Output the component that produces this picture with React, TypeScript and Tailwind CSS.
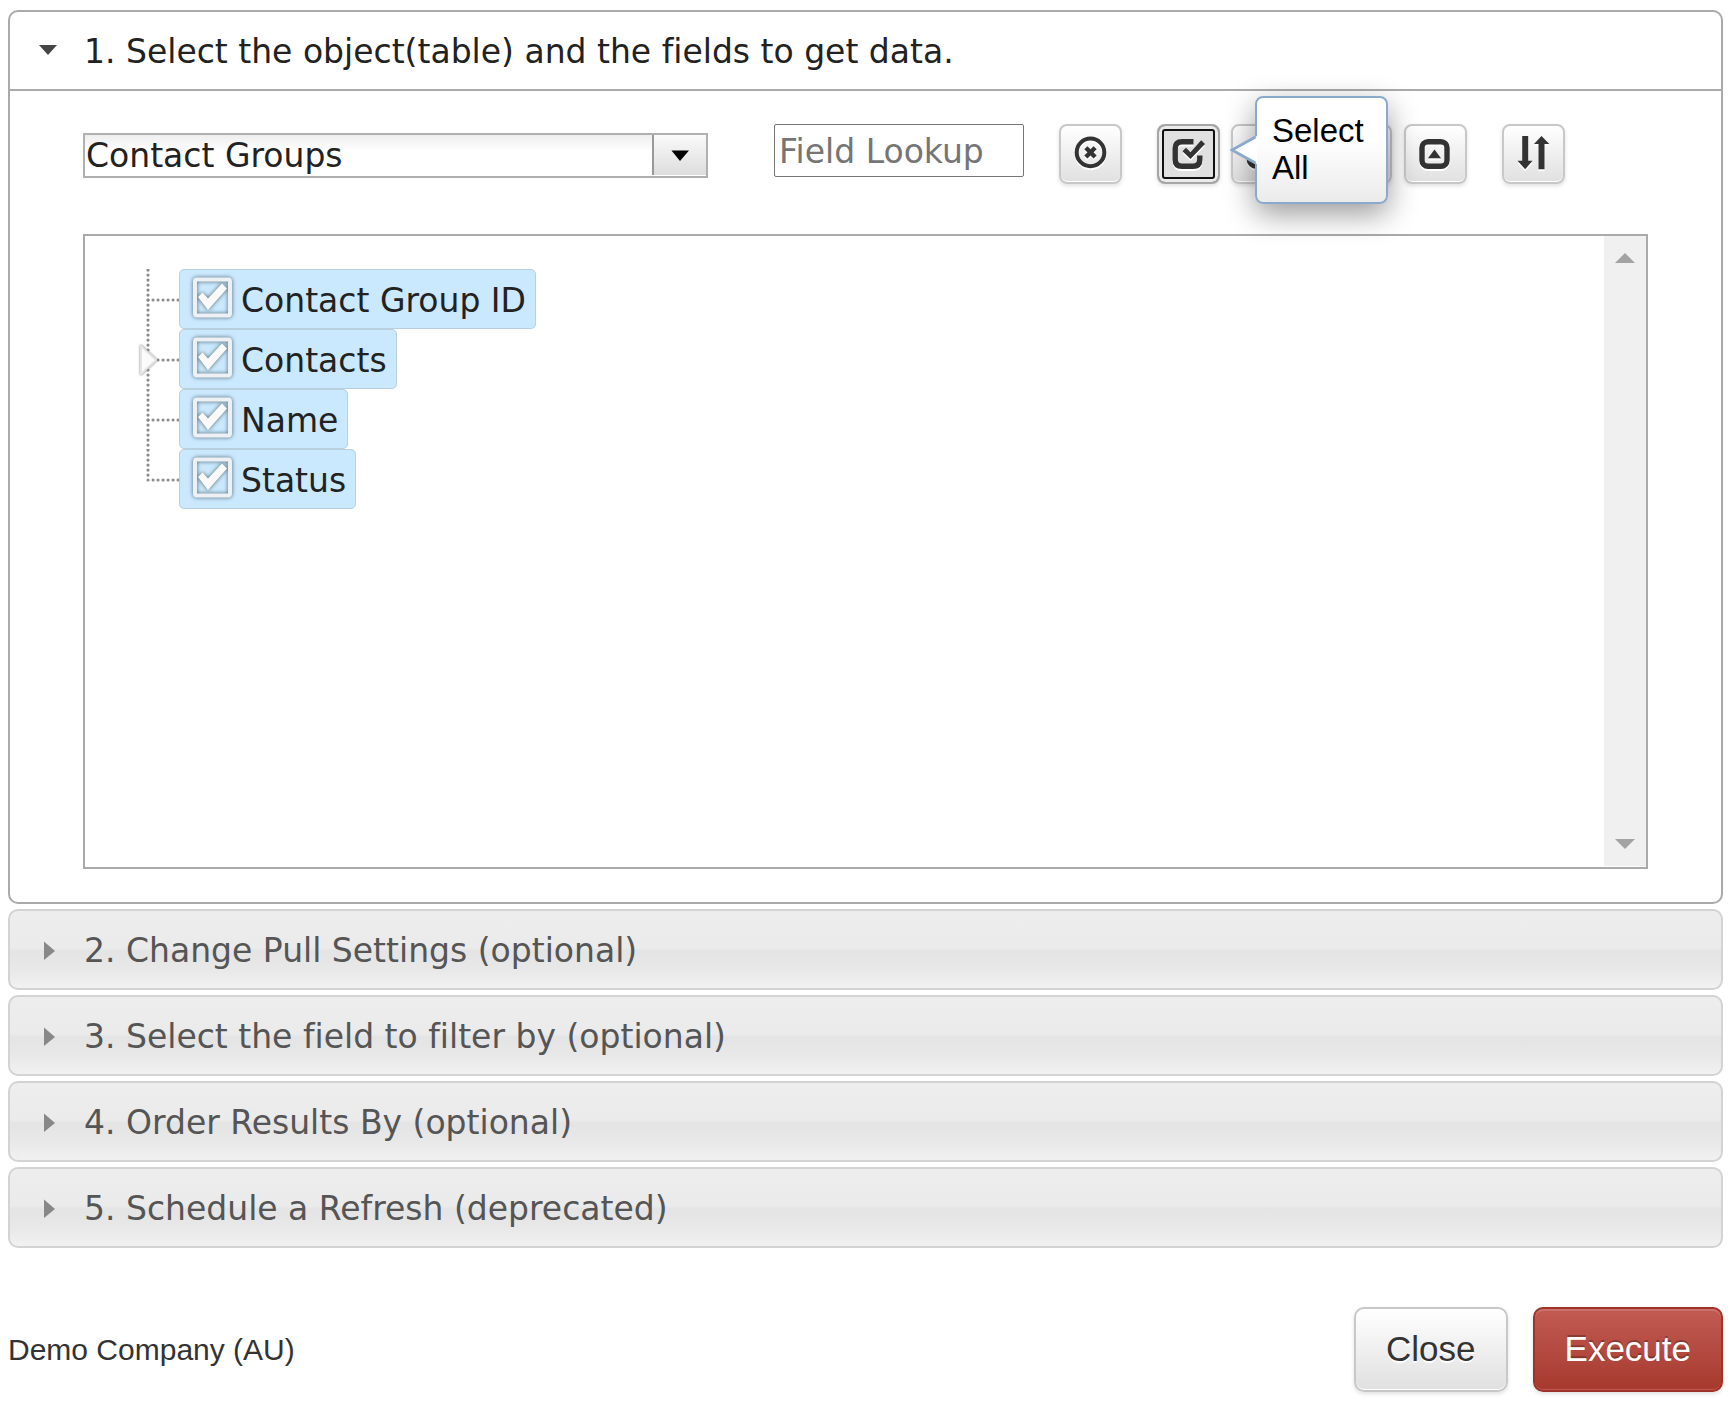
import { useState } from 'react';
import type { ReactNode } from 'react';

const fields = [
  { name: 'Contact Group ID', expandable: false },
  { name: 'Contacts', expandable: true },
  { name: 'Name', expandable: false },
  { name: 'Status', expandable: false },
];

const sections = [
  '2. Change Pull Settings (optional)',
  '3. Select the field to filter by (optional)',
  '4. Order Results By (optional)',
  '5. Schedule a Refresh (deprecated)',
];

function ToolButton({ label, active, onClick, children }: {
  label: string;
  active?: boolean;
  onClick?: () => void;
  children: ReactNode;
}) {
  return (
    <button
      type="button"
      aria-label={label}
      onClick={onClick}
      className={
        active
          ? 'flex h-[60px] w-[63px] items-center justify-center rounded-lg border-2 border-[#a6a6a6] bg-[#e0e0e0] shadow-[inset_0_0_0_3px_#ebebeb,inset_0_0_0_5px_#111111,0_2px_4px_rgba(0,0,0,0.12)]'
          : 'flex h-[60px] w-[63px] items-center justify-center rounded-lg border-2 border-[#c8c8c8] bg-linear-to-b from-white to-[#e0e0e0] shadow-[inset_0_-1px_0_#ffffff,0_2px_4px_rgba(0,0,0,0.12)]'
      }
    >
      <svg viewBox="0 0 36 36" className="size-9 shrink-0 fill-none stroke-[#333333] drop-shadow-[0_2px_0_#ffffff]">
        {children}
      </svg>
    </button>
  );
}

function Branch({ last, expandable }: { last: boolean; expandable: boolean }) {
  return (
    <svg viewBox="0 0 51 60" className="h-[60px] w-[51px] shrink-0 fill-none">
      <path
        d={last ? 'M20 1V31' : 'M20 1V60'}
        stroke="#8c8c8c"
        strokeWidth="3.2"
        strokeLinecap="round"
        strokeDasharray="0.1 4.9"
      />
      <path d="M20 31H51" stroke="#8c8c8c" strokeWidth="3" strokeLinecap="round" strokeDasharray="0.1 4.9" />
      {expandable && (
        <path
          d="M13 17V45L28 31Z"
          fill="#fbfbfb"
          stroke="#e4e4e4"
          strokeWidth="2"
          strokeLinejoin="round"
          className="drop-shadow-[0_0_1px_#777777]"
        />
      )}
    </svg>
  );
}

export default function App() {
  const [checked, setChecked] = useState(fields.map(() => true));
  const [lookup, setLookup] = useState('');

  const toggle = (i: number) => setChecked(checked.map((c, n) => (n === i ? !c : c)));

  return (
    <main className="flex flex-col bg-white pt-[10px] pr-[7px] pb-7 pl-2 font-['DejaVu_Sans',sans-serif] text-[33px] leading-10 text-[#222222] [font-variant-ligatures:none]">
      <div className="flex flex-col gap-[5px]">
        <section className="rounded-[10px] border-2 border-[#aaaaaa]">
          <button type="button" aria-expanded="true" className="flex h-[79px] w-full items-center border-b-2 border-[#aaaaaa] pl-7 text-left">
            <svg viewBox="0 0 20 12" className="h-3 w-5 shrink-0">
              <path d="M1 0H19L10 10Z" fill="#454545" />
            </svg>
            <span className="pt-0.5 pl-[26px]">1. Select the object(table) and the fields to get data.</span>
          </button>

          <div className="px-[73px] pt-[33px] pb-[33px]">
            <div className="flex items-start pr-[83px]">
              <div className="mt-[9px] grid min-w-0 flex-1 border-2 border-[#b0b0b0] bg-linear-to-b from-[#eeeeee] to-white to-40%">
                <select
                  aria-label="Object"
                  className="col-start-1 row-start-1 h-[41px] w-full appearance-none bg-transparent pt-px pr-[54px] pl-px leading-10 outline-none"
                >
                  <option>Contact Groups</option>
                </select>
                <span className="pointer-events-none col-start-1 row-start-1 mb-px flex w-[54px] items-center justify-center justify-self-end border-l-2 border-[#999999] bg-linear-to-b from-[#fafafa] to-[#dddddd]">
                  <svg viewBox="0 0 18 12" className="h-3 w-[18px]">
                    <path d="M0.5 1.5H18L9 12Z" fill="#000000" />
                  </svg>
                </span>
              </div>
              <input
                type="text"
                aria-label="Field Lookup"
                placeholder="Field Lookup"
                value={lookup}
                onChange={(e) => setLookup(e.target.value)}
                className="ml-[66px] h-[53px] w-[250px] rounded-[2px] border border-[#767676] px-1 pt-0.5 placeholder:text-[#757575]"
              />
              <div className="ml-[35px] flex gap-[35px]">
                <ToolButton label="Clear lookup" onClick={() => setLookup('')}>
                  <circle cx="17.5" cy="16.4" r="13.8" strokeWidth="4" />
                  <path d="M12.9 11.8L22.1 21M22.1 11.8L12.9 21" strokeWidth="4.4" />
                </ToolButton>
                <div className="flex gap-[11px]">
                  <div className="relative">
                    <ToolButton label="Select All" active onClick={() => setChecked(fields.map(() => true))}>
                      <path d="M22.5 5.7H11Q4.2 5.7 4.2 12.5V23.5Q4.2 30.3 11 30.3H22Q28.8 30.3 28.8 23.5V19.5" strokeWidth="5.4" />
                      <path
                        d="M11.5 15.3L15 11.8L19.5 16.3L30.2 4.2L34 8L19.5 22.9Z"
                        className="fill-[#333333]"
                        stroke="none"
                      />
                    </ToolButton>
                    <div
                      role="tooltip"
                      className="absolute -top-7 left-[98px] z-10 h-[108px] w-[133px] rounded-lg border-2 border-[#8aa9cc] bg-linear-to-b from-white from-40% to-[#ebebeb] pt-3.5 pl-[15px] font-['Liberation_Sans',Arial,sans-serif] leading-[37px] text-black shadow-[0_10px_30px_rgba(0,0,0,0.4)]"
                    >
                      Select All
                      <svg viewBox="0 0 27 32" className="absolute top-9 -left-[27px] h-8 w-[27px]">
                        <path d="M27 2L2 16L27 30Z" fill="#ffffff" />
                        <path d="M25.5 3L2 16L25.5 29" fill="none" stroke="#8aa9cc" strokeWidth="2.8" />
                      </svg>
                    </div>
                  </div>
                  <ToolButton label="Clear All" onClick={() => setChecked(fields.map(() => false))}>
                    <rect x="4.2" y="5.7" width="25" height="24.6" rx="7" strokeWidth="5.2" />
                  </ToolButton>
                </div>
                <div className="flex gap-3">
                  <ToolButton label="Expand All">
                    <rect x="4.2" y="5.7" width="25" height="24.6" rx="7" strokeWidth="5.2" />
                    <path d="M10.2 14H23.2L16.7 22.4Z" className="fill-[#333333]" stroke="none" />
                  </ToolButton>
                  <ToolButton label="Collapse All">
                    <rect x="4" y="5.7" width="25" height="24.6" rx="6" strokeWidth="5.4" />
                    <path d="M10 22.2H23L16.5 13.4Z" className="fill-[#333333]" stroke="none" />
                  </ToolButton>
                </div>
                <ToolButton label="Sort">
                  <path
                    d="M6.2 0H12.2V24.8H16.5L9.2 33.2L1.5 24.8H6.2ZM25.5 0L33.3 8H28.5V33.2H22.5V8H18Z"
                    className="fill-[#333333]"
                    stroke="none"
                  />
                </ToolButton>
              </div>
            </div>

            <div className="mt-[50px] flex h-[635px] justify-between border-2 border-[#aaaaaa]">
              <ul className="pt-[33px] pl-[43px]">
                {fields.map((field, i) => (
                  <li key={field.name} className="flex">
                    <Branch last={i === fields.length - 1} expandable={field.expandable} />
                    <label className="flex h-[60px] items-center rounded-[5px] border border-[#b8cfde] bg-[#cbe9fe] pr-[9px] pl-3">
                      <span className="grid size-10">
                        <input
                          type="checkbox"
                          checked={checked[i]}
                          onChange={() => toggle(i)}
                          className="peer col-start-1 row-start-1 size-10 appearance-none"
                        />
                        <svg
                          viewBox="0 0 40 40"
                          className="pointer-events-none col-start-1 row-start-1 hidden size-10 overflow-visible fill-none drop-shadow-[0_0_2px_#4d6573] peer-checked:block"
                        >
                          <rect x="3" y="0.5" width="35" height="36" rx="2" stroke="#eef1f4" strokeWidth="4" />
                          <path d="M6 18L10.5 13.5L16 19.5L30 4.5L35 9.5L16 31Z" fill="#fafafa" />
                        </svg>
                      </span>
                      <span className="pt-1 pl-[9px]">{field.name}</span>
                    </label>
                  </li>
                ))}
              </ul>
              <div className="mb-px flex w-[42px] flex-col items-center justify-between bg-[#f0f0f0] py-4">
                <svg viewBox="0 0 20 12" className="h-3 w-5">
                  <path d="M0 11H20L10 1Z" fill="#a3a3a3" />
                </svg>
                <svg viewBox="0 0 20 12" className="h-3 w-5">
                  <path d="M0 1H20L10 11Z" fill="#a3a3a3" />
                </svg>
              </div>
            </div>
          </div>
        </section>

        {sections.map((title) => (
          <button
            key={title}
            type="button"
            aria-expanded="false"
            className="flex h-[81px] items-center rounded-[10px] border-2 border-[#d3d3d3] bg-[linear-gradient(#ededed,#ebebeb_48%,#e4e4e4_52%,#e8e8e8_75%,#f1f1f1)] pl-[33px] text-left text-[#555555]"
          >
            <svg viewBox="0 0 12 20" className="h-5 w-3 shrink-0">
              <path d="M1 1.5V20L12 11Z" fill="#888888" />
            </svg>
            <span className="pt-0.5 pl-[29px]">{title}</span>
          </button>
        ))}
      </div>

      <footer className="flex items-center justify-between pt-[59px] font-['Liberation_Sans',Arial,sans-serif]">
        <span className="text-[30px] text-[#333333]">Demo Company (AU)</span>
        <div className="flex gap-[25px] text-[35px]">
          <button
            type="button"
            className="h-[85px] rounded-[10px] border-2 border-[#c8c8c8] bg-linear-to-b from-white to-[#e0e0e0] px-[30px] pb-0.5 text-[#333333] shadow-[inset_0_-1px_0_#ffffff,0_2px_4px_rgba(0,0,0,0.12)] [text-shadow:0_2px_0_#ffffff]"
          >
            Close
          </button>
          <button
            type="button"
            className="h-[85px] rounded-[10px] border-2 border-[#a03329] bg-linear-to-b from-[#c25b53] to-[#a6392e] px-[30px] pb-0.5 text-white shadow-[inset_0_2px_0_rgba(255,255,255,0.15),inset_0_-1px_0_#bd5a52,0_2px_4px_rgba(0,0,0,0.12)] [text-shadow:0_-2px_0_rgba(0,0,0,0.25)]"
          >
            Execute
          </button>
        </div>
      </footer>
    </main>
  );
}
